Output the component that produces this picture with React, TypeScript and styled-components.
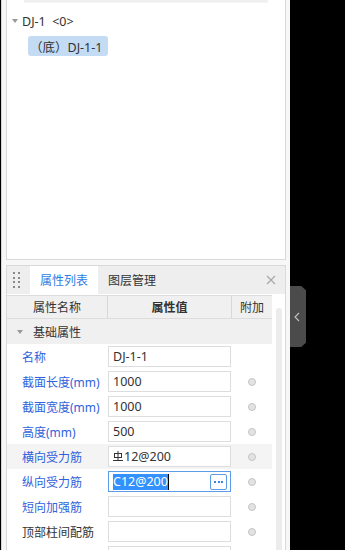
import React from "react";
import styled, { createGlobalStyle } from "styled-components";

const GlobalStyle = createGlobalStyle`
  html, body {
    margin: 0;
    padding: 0;
    background: #000;
  }
  body {
    font-family: "Noto Sans", "Noto Sans CJK SC", sans-serif;
    font-size: 12px;
    color: #333;
  }
`;

const Screen = styled.div`
  display: flex;
  width: 345px;
  height: 550px;
  overflow: hidden;
`;

const LeftArea = styled.div`
  width: 280px;
  flex-shrink: 0;
  margin-left: 1px;
  border-left: 1px solid #d6d6d6;
  padding: 0 4px;
  background: #f7f7f7;
  display: flex;
  flex-direction: column;
  gap: 5px;
`;

const RightArea = styled.div`
  flex: 1;
  background: #000;
  padding-top: 286px;
`;

const Handle = styled.div`
  width: 16px;
  height: 61px;
  background: #4b4b4b;
  clip-path: polygon(0 0, 70% 0, 100% 7%, 100% 93%, 70% 100%, 0 100%);
  display: flex;
  align-items: center;
  justify-content: center;
  padding-right: 2px;
  box-sizing: border-box;
`;

const TreePanel = styled.div`
  height: 260px;
  flex-shrink: 0;
  box-sizing: border-box;
  background: #fff;
  border: 1px solid #d9d9d9;
  border-top: none;
`;

const SearchEdge = styled.div`
  margin: 0 17px;
  height: 2px;
  background: #efefef;
  border-bottom: 1px solid #f6f6f6;
`;

const TreeRoot = styled.div`
  display: flex;
  align-items: center;
  height: 20px;
  margin-top: 8px;
  padding-left: 5px;
  font-size: 12.5px;
  color: #333;
`;

const Caret = styled.span`
  width: 0;
  height: 0;
  border-left: 3px solid transparent;
  border-right: 3px solid transparent;
  border-top: 4px solid #999;
  margin-right: 4px;
`;

const TreeLeaf = styled.div`
  display: inline-flex;
  align-items: center;
  margin: 5px 0 0 21px;
  height: 20px;
  padding: 0 6px 0 2px;
  background: #c4dbf4;
  border-radius: 3px;
  font-size: 12.5px;
  color: #333;
`;

const PropPanel = styled.div`
  flex: 1;
  min-height: 0;
  overflow: hidden;
  background: #fff;
  border: 1px solid #d9d9d9;
  border-bottom: none;
  display: flex;
  flex-direction: column;
`;

const TabBar = styled.div`
  height: 28px;
  flex-shrink: 0;
  background: #eeeeee;
  display: flex;
  align-items: stretch;
`;

const Grip = styled.div`
  width: 23px;
  display: grid;
  grid-template-columns: 2px 2px;
  grid-auto-rows: 2px;
  column-gap: 3px;
  row-gap: 2.7px;
  align-content: center;
  padding-left: 6px;
  box-sizing: border-box;
`;

const Dot = styled.span`
  background: #8a8a8a;
`;

const Tab = styled.div<{ active?: boolean }>`
  width: 68px;
  display: flex;
  align-items: center;
  justify-content: center;
  background: ${(p) => (p.active ? "#fff" : "transparent")};
  color: ${(p) => (p.active ? "#2f7de4" : "#333")};
  font-size: 12px;
`;

const Close = styled.div`
  margin-left: auto;
  width: 28px;
  display: flex;
  align-items: center;
  justify-content: center;
`;

const TableWrap = styled.div`
  flex: 1;
  display: flex;
  padding-top: 1px;
`;

const Table = styled.div`
  width: 265px;
  display: flex;
  flex-direction: column;
`;

const ScrollCol = styled.div`
  flex: 1;
  padding: 13px 0 0 4px;
`;

const Thumb = styled.div`
  width: 6px;
  height: 260px;
  background: #ececec;
  border-radius: 3px;
`;

const HeadRow = styled.div`
  display: grid;
  grid-template-columns: 100px 124px 41px;
  height: 24px;
  background: #f0f0f0;
  border-top: 1px solid #dcdcdc;
  border-bottom: 1px solid #dcdcdc;
  box-sizing: border-box;
`;

const HeadCell = styled.div<{ bold?: boolean }>`
  display: flex;
  align-items: center;
  justify-content: center;
  border-left: 1px solid #d8d8d8;
  font-weight: ${(p) => (p.bold ? 600 : 400)};
  color: #333;
  &:first-child {
    border-left: none;
  }
`;

const SectionRow = styled.div`
  height: 25px;
  background: #f0f0f0;
  display: flex;
  align-items: center;
  padding-left: 10px;
  gap: 6px;
  color: #333;
`;

const Row = styled.div<{ shade?: boolean }>`
  display: grid;
  grid-template-columns: 101px 123px 41px;
  height: 25px;
  flex-shrink: 0;
  align-items: center;
  background: ${(p) => (p.shade ? "#f4f4f4" : "#fff")};
`;

const Label = styled.div<{ plain?: boolean }>`
  padding-left: 15px;
  color: ${(p) => (p.plain ? "#333" : "#2f62dc")};
  white-space: nowrap;
  font-size: 12px;
`;

const Field = styled.div<{ focus?: boolean }>`
  height: 21px;
  box-sizing: border-box;
  border: 1px solid ${(p) => (p.focus ? "#5b9be8" : "#dddddd")};
  background: #fff;
  display: flex;
  align-items: center;
  padding-left: 4px;
  padding-right: 3px;
  color: #333;
  font-size: 12.5px;
`;

const Selected = styled.span`
  background: #3390ff;
  color: #fff;
  line-height: 16px;
  border-right: 1px solid #000;
`;

const MoreBtn = styled.div`
  margin-left: auto;
  width: 15px;
  height: 14px;
  border: 1px solid #5b9be8;
  border-radius: 2px;
  display: flex;
  align-items: center;
  justify-content: center;
  gap: 1.5px;
`;

const MoreDot = styled.span`
  width: 2px;
  height: 2px;
  background: #3b82e0;
`;

const Radio = styled.span`
  justify-self: center;
  width: 8px;
  height: 8px;
  border-radius: 50%;
  background: #e3e3e3;
  border: 1px solid #c4c4c4;
  box-sizing: border-box;
  margin-left: 1px;
`;

const RebarSymbol = () => (
  <svg width="10" height="11" viewBox="0 0 10 11" style={{ marginRight: 1 }}>
    <rect x="1.5" y="2.5" width="7" height="4" fill="none" stroke="#333" strokeWidth="1" />
    <line x1="5" y1="0" x2="5" y2="9.5" stroke="#333" strokeWidth="1" />
    <line x1="0" y1="9.5" x2="10" y2="9.5" stroke="#333" strokeWidth="1" />
  </svg>
);

type Prop = {
  label: string;
  value?: React.ReactNode;
  plain?: boolean;
  radio?: boolean;
  shade?: boolean;
  focus?: boolean;
};

const rows: Prop[] = [
  { label: "名称", value: "DJ-1-1", radio: false },
  { label: "截面长度(mm)", value: "1000", radio: true },
  { label: "截面宽度(mm)", value: "1000", radio: true },
  { label: "高度(mm)", value: "500", radio: true },
  {
    label: "横向受力筋",
    value: (
      <>
        <RebarSymbol />
        12@200
      </>
    ),
    radio: true,
    shade: true,
  },
  { label: "纵向受力筋", radio: true, focus: true },
  { label: "短向加强筋", value: "", radio: true },
  { label: "顶部柱间配筋", value: "", radio: true, plain: true },
  { label: "", value: "", radio: true, plain: true },
];

export default function App() {
  return (
    <>
      <GlobalStyle />
      <Screen>
        <LeftArea>
          <TreePanel>
            <SearchEdge />
            <TreeRoot>
              <Caret />
              DJ-1&nbsp;&nbsp;&lt;0&gt;
            </TreeRoot>
            <TreeLeaf>（底）DJ-1-1</TreeLeaf>
          </TreePanel>
          <PropPanel>
            <TabBar>
              <Grip>
                {Array.from({ length: 8 }).map((_, i) => (
                  <Dot key={i} />
                ))}
              </Grip>
              <Tab active>属性列表</Tab>
              <Tab>图层管理</Tab>
              <Close>
                <svg width="10" height="10" viewBox="0 0 10 10">
                  <path d="M1 1 L9 9 M9 1 L1 9" stroke="#a8a8a8" strokeWidth="1.2" />
                </svg>
              </Close>
            </TabBar>
            <TableWrap>
              <Table>
                <HeadRow>
                  <HeadCell>属性名称</HeadCell>
                  <HeadCell bold>属性值</HeadCell>
                  <HeadCell>附加</HeadCell>
                </HeadRow>
                <SectionRow>
                  <Caret />
                  基础属性
                </SectionRow>
                {rows.map((r, i) => (
                  <Row key={i} shade={r.shade}>
                    <Label plain={r.plain}>{r.label}</Label>
                    <Field focus={r.focus}>
                      {r.focus ? (
                        <>
                          <Selected>C12@200</Selected>
                          <MoreBtn>
                            <MoreDot />
                            <MoreDot />
                            <MoreDot />
                          </MoreBtn>
                        </>
                      ) : (
                        r.value
                      )}
                    </Field>
                    {r.radio ? <Radio /> : <span />}
                  </Row>
                ))}
              </Table>
              <ScrollCol>
                <Thumb />
              </ScrollCol>
            </TableWrap>
          </PropPanel>
        </LeftArea>
        <RightArea>
          <Handle>
            <svg width="6" height="10" viewBox="0 0 6 10">
              <path d="M5 1 L1 5 L5 9" fill="none" stroke="#bdbdbd" strokeWidth="1.2" />
            </svg>
          </Handle>
        </RightArea>
      </Screen>
    </>
  );
}
